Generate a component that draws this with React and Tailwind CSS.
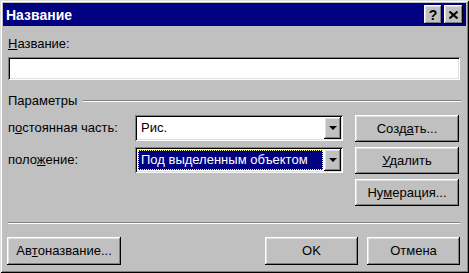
const raised =
  'shadow-[inset_-1px_-1px_#000,inset_1px_1px_#fff,inset_-2px_-2px_#808080,inset_2px_2px_#dfdfdf]'
const sunken =
  'shadow-[inset_1px_1px_#808080,inset_-1px_-1px_#fff,inset_2px_2px_#000,inset_-2px_-2px_#dfdfdf]'

function Btn({ children, className = '' }) {
  return (
    <div className={`flex items-center justify-center bg-[#c0c0c0] text-black ${raised} ${className}`}>
      {children}
    </div>
  )
}

function Combo({ value, selected }) {
  return (
    <div className={`flex h-[26px] w-[208px] bg-white p-[2px] ${sunken}`}>
      <div className="flex flex-1 items-center p-[1px]">
        {selected ? (
          <div className="flex h-full w-full items-center border border-dotted border-[#ffff80] bg-[#000080] pl-[2px] text-white">
            {value}
          </div>
        ) : (
          <div className="pl-[3px]">{value}</div>
        )}
      </div>
      <Btn className="w-[17px]">
        <svg width="8" height="4" viewBox="0 0 8 4">
          <path d="M0 0h8L4 4z" fill="#000" />
        </svg>
      </Btn>
    </div>
  )
}

export default function App() {
  return (
    <div
      className="flex h-[273px] w-[469px] flex-col bg-[#c0c0c0] p-[3px] text-[13px] leading-[14px] text-black shadow-[inset_1px_1px_#dfdfdf,inset_-1px_-1px_#000,inset_2px_2px_#fff,inset_-2px_-2px_#808080]"
      style={{ fontFamily: '"Liberation Sans", Arial, sans-serif' }}
    >
      {/* Title bar */}
      <div className="flex h-[23px] items-center justify-between bg-[#000080] pl-[3px] pr-[3px]">
        <span className="text-[14px] font-bold text-white">Название</span>
        <div className="flex gap-[2px]">
          <Btn className="h-[19px] w-[18px] text-[14px] font-bold leading-none">?</Btn>
          <Btn className="h-[19px] w-[19px]">
            <svg width="9" height="8" viewBox="0 0 9 8">
              <path d="M0.5 0.5L8.5 7.5M8.5 0.5L0.5 7.5" stroke="#000" strokeWidth="2" />
            </svg>
          </Btn>
        </div>
      </div>

      <div className="flex flex-1 flex-col px-[5px] pt-[11px]">
        <div>
          <u>Н</u>азвание:
        </div>
        <div className={`mt-[6px] h-[23px] w-[452px] bg-white ${sunken}`} />

        <div className="mt-[14px] flex items-center">
          <span>Параметры</span>
          <div className="ml-[6px] h-[2px] flex-1 border-t border-b border-t-[#808080] border-b-white" />
        </div>

        <div className="mt-[7px] flex">
          <div className="flex flex-col gap-[6px]">
            <div className="flex h-[26px] items-center">
              <span className="w-[127px]">
                п<u>о</u>стоянная часть:
              </span>
              <Combo value="Рис." />
            </div>
            <div className="flex h-[26px] items-center">
              <span className="w-[127px]">
                поло<u>ж</u>ение:
              </span>
              <Combo value="Под выделенным объектом" selected />
            </div>
          </div>
          <div className="ml-[12px] flex flex-col gap-[5px]">
            <Btn className="h-[27px] w-[104px]">
              Созд<u>а</u>ть...
            </Btn>
            <Btn className="h-[27px] w-[104px]">
              <span>
                <u>У</u>далить
              </span>
            </Btn>
            <Btn className="h-[27px] w-[104px]">
              Ну<u>м</u>ерация...
            </Btn>
          </div>
        </div>

        <div className="mt-[16px] h-[2px] w-[452px] border-t border-b border-t-[#808080] border-b-white" />

        <div className="mt-[13px] flex">
          <Btn className="-ml-[1px] h-[28px] w-[114px]">
            Ав<u>т</u>оназвание...
          </Btn>
          <Btn className="ml-[144px] h-[28px] w-[93px]">OK</Btn>
          <Btn className="ml-[9px] h-[28px] w-[93px]">Отмена</Btn>
        </div>
      </div>
    </div>
  )
}
